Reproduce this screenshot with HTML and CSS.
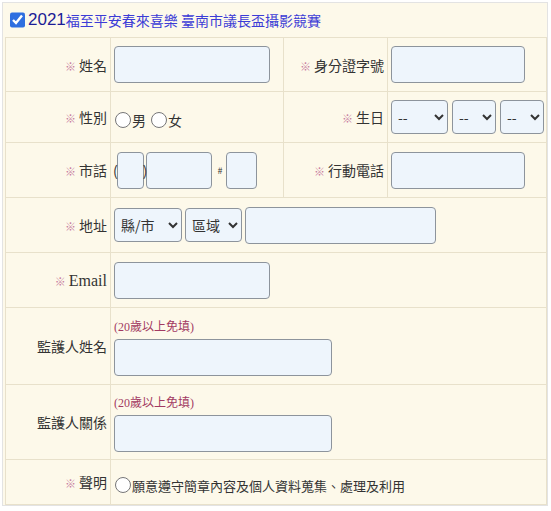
FILE: index.html
```html
<!DOCTYPE html>
<html>
<head>
    <meta charset="utf-8">
    <title>2021福至平安春來喜樂 臺南市議長盃攝影競賽</title>
    <link rel="stylesheet" href="styles.css">
</head>
<body>
    <div class="box">
        <div class="title">
            <input type="checkbox" checked>
            <span class="year">2021</span><span class="name">福至平安春來喜樂 臺南市議長盃攝影競賽</span>
        </div>
        <table class="form">
            <colgroup>
                <col class="c1"><col class="c2"><col class="c3"><col class="c4">
            </colgroup>
            <tr class="r1">
                <th><span class="req">※</span>姓名</th>
                <td><input type="text" class="w156"></td>
                <th><span class="req">※</span>身分證字號</th>
                <td><input type="text" class="w134"></td>
            </tr>
            <tr class="r2">
                <th><span class="req">※</span>性別</th>
                <td>
                    <div class="line radios">
                        <label><input type="radio" name="sex">男</label>
                        <label><input type="radio" name="sex">女</label>
                    </div>
                </td>
                <th><span class="req">※</span>生日</th>
                <td>
                    <div class="line gap4">
                        <select class="w57"><option>--</option></select>
                        <select class="w44"><option>--</option></select>
                        <select class="w44"><option>--</option></select>
                    </div>
                </td>
            </tr>
            <tr class="r3">
                <th><span class="req">※</span>市話</th>
                <td>
                    <div class="line">
                        <span class="paren">(</span><input type="text" class="w26"><span class="paren">)</span>
                        <input type="text" class="w66">
                        <span class="hash">#</span>
                        <input type="text" class="w31">
                    </div>
                </td>
                <th><span class="req">※</span>行動電話</th>
                <td><input type="text" class="w134"></td>
            </tr>
            <tr class="r4">
                <th><span class="req">※</span>地址</th>
                <td colspan="3">
                    <div class="line gap3">
                        <select class="w68"><option>縣/市</option></select>
                        <select class="w57"><option>區域</option></select>
                        <input type="text" class="w191 addr">
                    </div>
                </td>
            </tr>
            <tr class="r5">
                <th><span class="req">※</span><span class="en">Email</span></th>
                <td colspan="3"><input type="text" class="w156"></td>
            </tr>
            <tr class="r6">
                <th>監護人姓名</th>
                <td colspan="3">
                    <div class="note">(20歲以上免填)</div>
                    <input type="text" class="w218">
                </td>
            </tr>
            <tr class="r7">
                <th>監護人關係</th>
                <td colspan="3">
                    <div class="note">(20歲以上免填)</div>
                    <input type="text" class="w218">
                </td>
            </tr>
            <tr class="r8">
                <th><span class="req">※</span>聲明</th>
                <td colspan="3">
                    <label class="agree"><input type="radio" name="agree">願意遵守簡章內容及個人資料蒐集、處理及利用</label>
                </td>
            </tr>
        </table>
    </div>
</body>
</html>
```

FILE: styles.css
```css
body {
    margin: 0;
    background-color: #fff;
    font-family: "Noto Sans CJK TC", "Liberation Sans", sans-serif;
    color: #333;
}
.box {
    width: 544px;
    margin: 2px 0 0 2px;
    border: 1px solid #e3e3e3;
    background-color: #fdf9ea;
}
.title {
    display: flex;
    align-items: center;
    height: 34px;
    padding-left: 5px;
}
.title input {
    width: 15px;
    height: 16px;
    margin: 0 3px 0 2px;
    accent-color: #2f6fe0;
}
.year {
    font-family: "Liberation Sans", sans-serif;
    font-size: 17px;
    color: #1c1c96;
}
.name {
    font-size: 14px;
    color: #3c3cd6;
}
.form {
    width: 541px;
    margin-left: 2px;
    border-collapse: collapse;
    border: 1px solid #e4ddc7;
    table-layout: fixed;
}
.c1 { width: 105px; }
.c2 { width: 173px; }
.c3 { width: 104px; }
.c4 { width: 159px; }
.form th,
.form td {
    border: 1px solid #e8e1cb;
    vertical-align: middle;
}
.form th {
    font-weight: normal;
    font-size: 14px;
    text-align: right;
    padding: 0 3px 0 0;
    white-space: nowrap;
}
.form td {
    padding: 0 0 0 3px;
    font-size: 14px;
}
.r1 { height: 54px; }
.r2 { height: 51px; }
.r3 { height: 55px; }
.r4 { height: 55px; }
.r5 { height: 55px; }
.r6 { height: 77px; }
.r7 { height: 75px; }
.r8 { height: 45px; }
.req {
    color: #c77b9f;
    font-size: 11px;
    margin-right: 3px;
}
.en {
    font-family: "Liberation Serif", serif;
    font-size: 16px;
}
input[type="text"],
select {
    box-sizing: border-box;
    height: 37px;
    margin: 0;
    border: 1px solid #8d949c;
    border-radius: 4px;
    background-color: #eef5fc;
    font-family: inherit;
    font-size: 14px;
    color: #333;
}
select {
    height: 34px;
    padding: 0 2px;
}
.line {
    display: flex;
    align-items: center;
}
.gap3 { gap: 3px; }
.gap4 { gap: 4px; }
.addr { margin-left: 6px; }
.radios {
    gap: 4px;
    padding-top: 6px;
}
.radios label,
.agree {
    display: flex;
    align-items: center;
}
input[type="radio"] {
    width: 16px;
    height: 16px;
    margin: 0 1px 0 1px;
}
.agree {
    font-size: 13px;
    padding-top: 6px;
}
.paren {
    font-size: 14px;
    margin: 0 -1px;
    position: relative;
    z-index: 1;
}
.hash {
    font-size: 9px;
    margin: 0 4px 0 5px;
}
.note {
    font-family: "Liberation Serif", "Noto Sans CJK TC", serif;
    font-size: 12px;
    color: #a23a62;
    margin-bottom: 4px;
}
.w26 { width: 27px; }
.w31 { width: 31px; }
.w44 { width: 44px; }
.w57 { width: 57px; }
.w66 { width: 66px; }
.w68 { width: 68px; }
.w134 { width: 134px; }
.w156 { width: 156px; }
.w191 { width: 191px; }
.w218 { width: 218px; }
```
